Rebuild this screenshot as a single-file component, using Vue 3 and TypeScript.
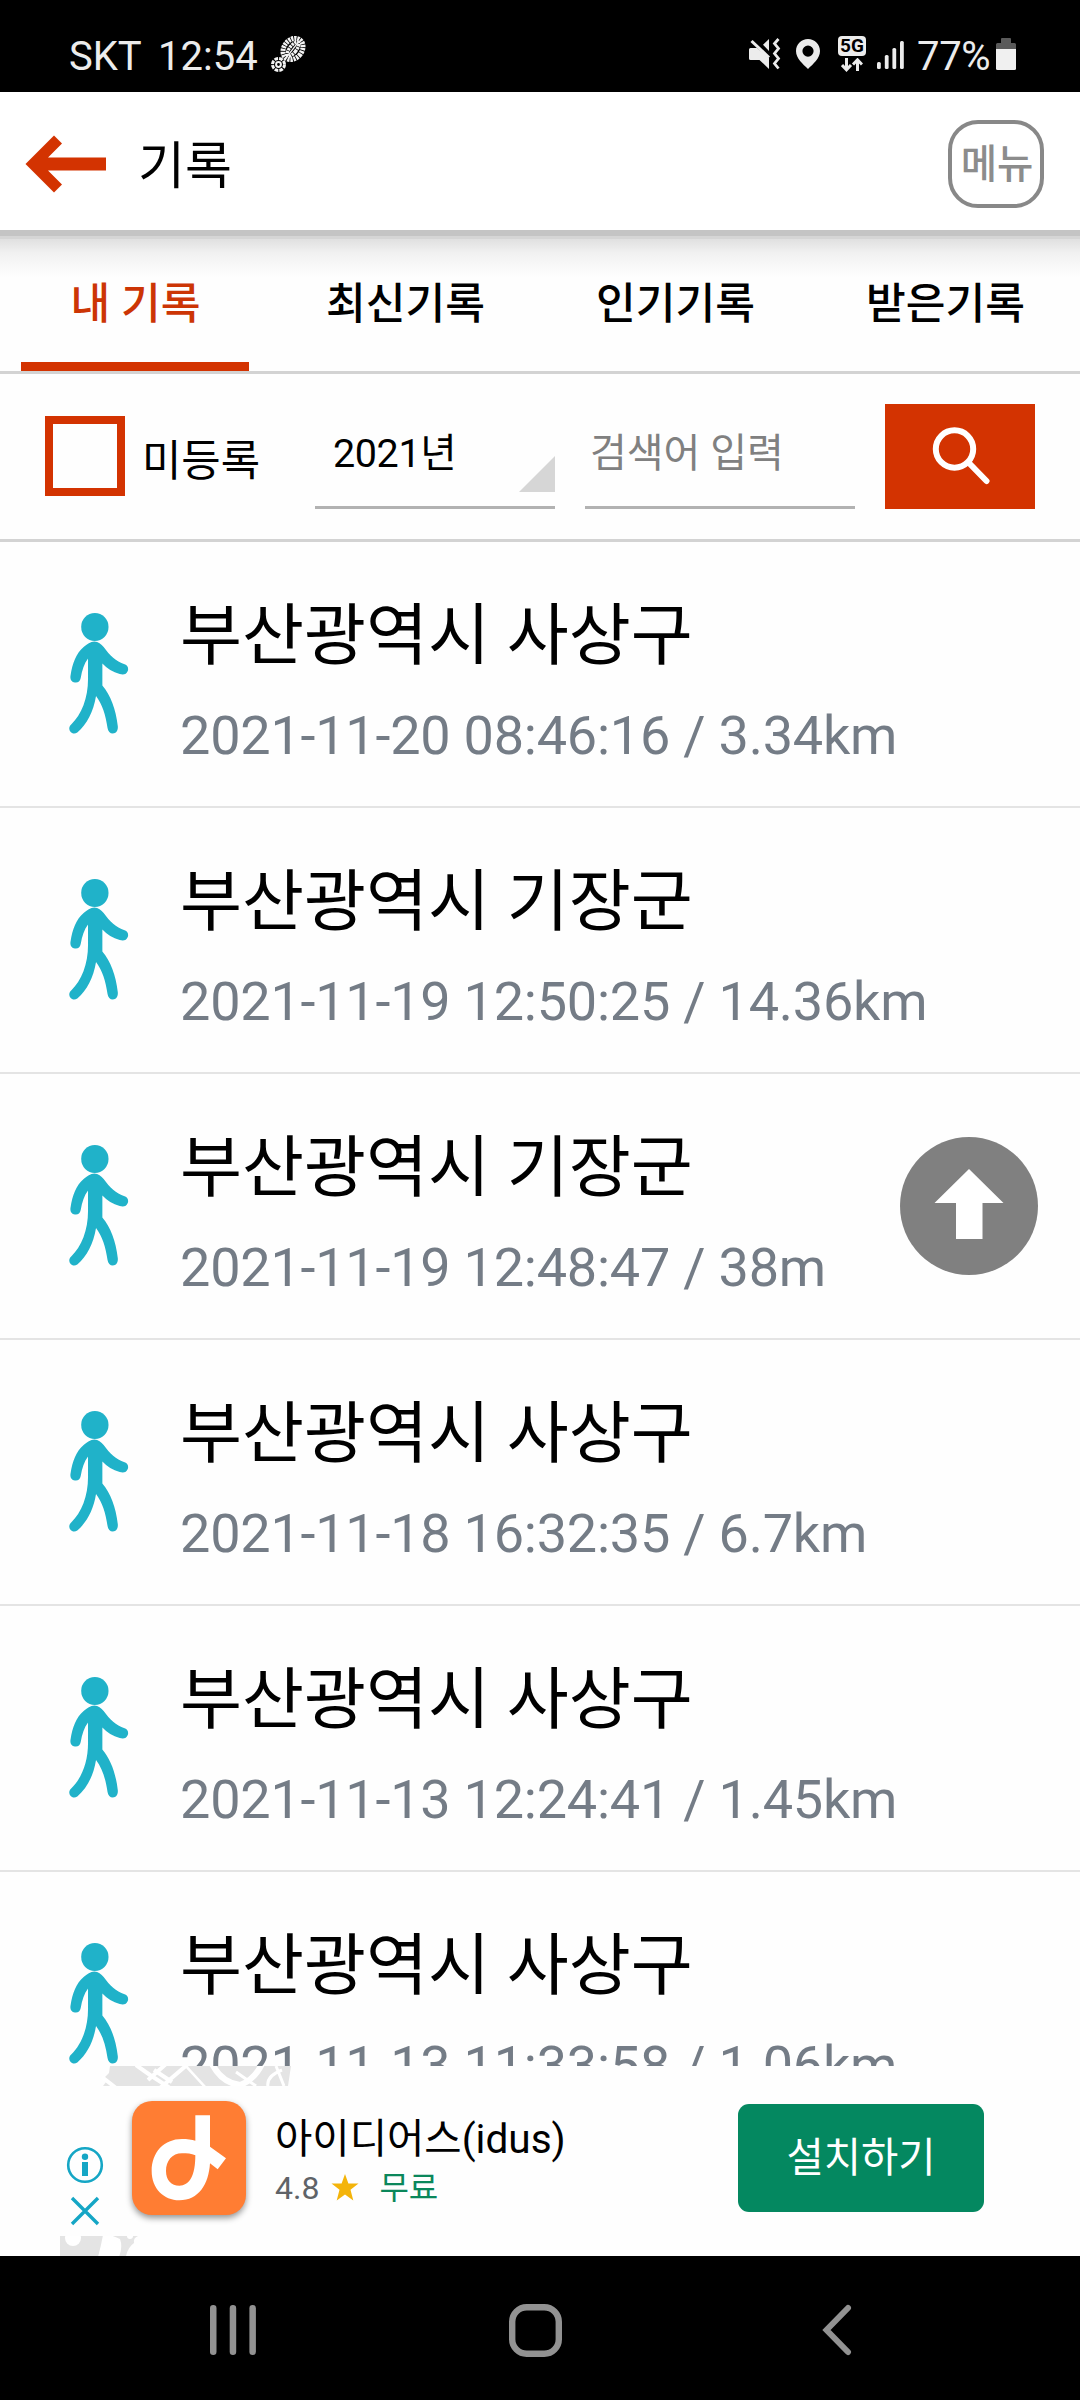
<script setup lang="ts">
import { ref } from 'vue'

interface WalkRecord {
  place: string
  time: string
  distance: string
}

const tabs: string[] = ['내 기록', '최신기록', '인기기록', '받은기록']
const activeTab = ref(0)

const records: WalkRecord[] = [
  { place: '부산광역시 사상구', time: '2021-11-20 08:46:16', distance: '3.34km' },
  { place: '부산광역시 기장군', time: '2021-11-19 12:50:25', distance: '14.36km' },
  { place: '부산광역시 기장군', time: '2021-11-19 12:48:47', distance: '38m' },
  { place: '부산광역시 사상구', time: '2021-11-18 16:32:35', distance: '6.7km' },
  { place: '부산광역시 사상구', time: '2021-11-13 12:24:41', distance: '1.45km' },
  { place: '부산광역시 사상구', time: '2021-11-13 11:33:58', distance: '1.06km' },
]
</script>

<template>
  <div class="screen">
    <div class="status">
      <span class="carrier">SKT</span>
      <span class="clock">12:54</span>
      <svg class="foot" width="36" height="38" viewBox="0 0 36 38">
        <g fill="none" stroke="#f4f4f4">
          <g transform="rotate(38 23 13)">
            <ellipse cx="23" cy="13" rx="9" ry="11.5" stroke-width="5" stroke-dasharray="2.2 .8" />
            <ellipse cx="23" cy="13" rx="3.4" ry="8.5" stroke-width="3.4" stroke-dasharray="2.4 .7" />
            <path d="M23 4V22" stroke-width="1.4" />
          </g>
          <circle cx="8.500" cy="28.500" r="6" stroke-width="3" stroke-dasharray="3.6 1.1" />
          <circle cx="8.500" cy="28.500" r="2.400" stroke-width="2" />
        </g>
      </svg>
      <div class="status-right">
        <svg width="32" height="36" viewBox="0 0 32 36" fill="#ececec">
          <path d="M1.500 12H8L20 22V33L10.500 24H1.500Q0 24 0 22.500V13.500Q0 12 1.500 12ZM20 3V15L14 8.700Z" />
          <path d="M2.500 5L20 21.500" stroke="#ececec" stroke-width="3" fill="none" />
          <path d="M29.500 3L25.500 7.500L29.500 12.500L25.500 17.500L29.500 22.500L25.500 27.500L29.500 32.500" stroke="#ececec" stroke-width="2.800" fill="none" />
        </svg>
        <svg class="pin" width="24" height="36" viewBox="0 0 24 36">
          <path fill="#ececec" fill-rule="evenodd" d="M12 3C5.400 3 0 8.200 0 15C0 22.500 7 28 12 33C17 28 24 22.500 24 15C24 8.200 18.600 3 12 3ZM12 9.500A5.600 5.600 0 1 1 12 20.700A5.600 5.600 0 1 1 12 9.500Z" />
        </svg>
        <div class="net">
          <span class="net-label">5G</span>
          <svg width="22" height="14" viewBox="0 0 22 14" fill="none" stroke="#ececec" stroke-width="3">
            <path d="M5.500 0V12M1 7L5.500 11.800L10 7M16.500 13V2M12 6.500L16.500 1.800L21 6.500" />
          </svg>
        </div>
        <svg class="signal" width="27" height="30" viewBox="0 0 27 30" fill="#ececec">
          <rect x="0" y="22" width="3.800" height="7" rx="1.500" />
          <rect x="7.800" y="15" width="3.800" height="14" rx="1.500" />
          <rect x="15.400" y="8" width="3.800" height="21" rx="1.500" />
          <rect x="23" y="1" width="3.800" height="28" rx="1.500" />
        </svg>
        <span class="percent">77%</span>
        <svg class="battery" width="20" height="32" viewBox="0 0 20 32">
          <path d="M5 1Q5 0 6 0H14Q15 0 15 1V5H18.500Q20 5 20 6.500V11H0V6.500Q0 5 1.500 5H5Z" fill="#5a5a5a" />
          <path d="M0 11H20V30.500Q20 32 18.500 32H1.500Q0 32 0 30.500Z" fill="#f0f0f0" />
        </svg>
      </div>
    </div>

    <header class="header">
      <svg width="82" height="60" viewBox="0 0 82 60">
        <path d="M29 1.500L0.500 30L29 58.500L37 50.500L23 36.500H81V23.500H23L37 9.500Z" fill="#d33301" />
      </svg>
      <h1 class="title">기록</h1>
      <button class="menu">메뉴</button>
    </header>
    <div class="bar"></div>

    <nav class="tabs">
      <div v-for="(tab, i) in tabs" :key="tab" class="tab" :class="{ active: i === activeTab }" @click="activeTab = i">
        {{ tab }}
      </div>
    </nav>

    <div class="filters">
      <div class="check"></div>
      <span class="check-label">미등록</span>
      <div class="select">
        <span class="year">2021년</span>
        <svg width="36" height="36" viewBox="0 0 36 36"><path d="M36 0V36H0Z" fill="#d6d6d6" /></svg>
      </div>
      <div class="query">검색어 입력</div>
      <button class="search">
        <svg width="60" height="60" viewBox="0 0 60 60" fill="none" stroke="#fff" stroke-width="6" stroke-linecap="round">
          <circle cx="22.500" cy="24" r="18.700" />
          <path d="M37 38L54.500 56" />
        </svg>
      </button>
    </div>

    <div class="list">
      <div v-for="r in records" :key="r.time" class="row">
        <svg class="walker" width="60" height="122" viewBox="0 0 61.5 122" preserveAspectRatio="none">
          <circle cx="26.500" cy="14" r="14" fill="#20b2c9" />
          <path
            fill="#20b2c9"
            d="M26 28.500C30 28.500 33 31 35.500 34C42 42.500 48 48.500 57 51.200C60.500 52.500 61.200 55.500 60.200 58C59 61.500 55.500 62 52 61C45 59 39 55.500 34.200 50.500V72.500C42.500 82 48 96 50 113C50.500 117.500 48.500 120.500 45 120.500C42 120.500 40 118.500 39.500 115C37.500 102 34.500 92 27.700 83C25 99 18.500 111 8.500 119.500C6 121.300 3.200 120.800 1.500 118.800C-.4 116.500 0 113.500 2 111.700C13 101.500 19.500 85 19.500 66V45.500C15.500 50.500 13.500 57 12 65C11.300 68.500 9 70 6 69.500C2.500 69 1 66.500 1.500 63C3.500 50 7.500 40 15 34C18.500 31 22 28.500 26 28.500Z"
          />
        </svg>
        <div class="info">
          <div class="place">{{ r.place }}</div>
          <div class="meta">{{ r.time }} / {{ r.distance }}</div>
        </div>
      </div>
      <button class="to-top">
        <svg width="138" height="138" viewBox="0 0 138 138">
          <circle cx="69" cy="69" r="69" fill="#808080" />
          <path d="M69 32L103.500 66H82.500V102H56V66H34.500Z" fill="#fff" />
        </svg>
      </button>
    </div>

    <div class="ad">
      <svg class="ad-edge" width="1080" height="20" viewBox="0 0 1080 20">
        <path d="M110 0H291L288 20H103L106 16L104 12L109 7Z" fill="#e4e4e4" />
        <g fill="none" stroke="#fff">
          <path d="M102 11L116 22M136 -1L150 9L170 22M148 14L166 -2M160 22L188 -2M154 4L172 16" stroke-width="4" />
          <path d="M184 -2L206 22" stroke-width="2.500" />
          <path d="M212 -2Q222 17 240 19Q254 14 262 -2" stroke-width="6" />
          <path d="M236 6L256 20M268 21Q266 10 282 4M276 0L284 20" stroke-width="3" />
        </g>
      </svg>
      <div class="ad-body">
        <div class="ad-choices">
          <svg width="38" height="38" viewBox="0 0 38 38">
            <circle cx="19" cy="19" r="16.800" fill="none" stroke="#15a6c5" stroke-width="2.600" />
            <circle cx="19" cy="10.800" r="3.200" fill="#15a6c5" />
            <path d="M16 16H22V30H16Z" fill="#15a6c5" />
          </svg>
          <svg width="30" height="30" viewBox="0 0 30 30">
            <path d="M2 2L28 28M28 2L2 28" stroke="#15a6c5" stroke-width="3.400" fill="none" />
          </svg>
        </div>
        <div class="app-icon">
          <svg width="114" height="114" viewBox="0 0 342 342">
            <path
              fill="#fff"
              fill-rule="evenodd"
              d="M190 43H234V137L282 172L257 205L234 187C230 250 200 298 142 298C95 298 59 262 59 210C59 155 95 114 150 114C165 114 180 116 190 119ZM190 163C178 158 165 157 150 157C120 157 102 180 102 210C102 238 118 254 142 254C172 254 190 225 190 163Z"
            />
          </svg>
        </div>
        <div class="ad-text">
          <div class="ad-name">아이디어스(idus)</div>
          <div class="ad-sub">
            <span>4.8</span>
            <svg width="28" height="28" viewBox="0 0 28 28">
              <path d="M14 0L17.400 9.600H27.500L19.500 15.800L22.300 26.500L14 20.500L5.700 26.500L8.500 15.800L.5 9.600H10.600Z" fill="#f4b40a" />
            </svg>
            <span class="free">무료</span>
          </div>
        </div>
        <button class="install">설치하기</button>
      </div>
      <svg class="ad-edge" width="1080" height="20" viewBox="0 0 1080 20">
        <path d="M60 0H138Q133 2 134 7Q128 11 126 20H60Z" fill="#e4e4e4" />
        <circle cx="73" cy="2" r="8" fill="#fff" />
        <path d="M103 -1Q101 10 98 21H119Q123 11 120 3Q113 0 110 -1Z" fill="#fff" />
        <circle cx="130" cy="0" r="3" fill="#fff" />
      </svg>
    </div>

    <div class="navbar">
      <svg width="46" height="50" viewBox="0 0 46 50" fill="#929292">
        <rect x="0" width="6.500" height="50" rx="3.200" />
        <rect x="19.700" width="6.500" height="50" rx="3.200" />
        <rect x="39.400" width="6.500" height="50" rx="3.200" />
      </svg>
      <svg class="home" width="53" height="53" viewBox="0 0 53 53" fill="none">
        <rect x="3.200" y="3.200" width="46.600" height="46.600" rx="14.500" stroke="#929292" stroke-width="6.400" />
      </svg>
      <svg width="30" height="52" viewBox="0 0 30 52" fill="none">
        <path d="M26 4L4.500 26L26 48" stroke="#929292" stroke-width="6" stroke-linecap="round" />
      </svg>
    </div>
  </div>
</template>

<style>
body {
  margin: 0;
  background: #fff;
}
</style>

<style scoped>
.screen {
  width: 1080px;
  height: 2400px;
  overflow: hidden;
  background: #fefefe;
  color: #000;
  font-family: Roboto, "Noto Sans CJK KR", sans-serif;
  display: flex;
  flex-direction: column;
}
.screen svg {
  display: block;
  flex: none;
}
button {
  font-family: inherit;
  margin: 0;
  padding: 0;
  border: 0;
  background: none;
}

.status {
  height: 92px;
  flex: none;
  background: #000;
  color: #ececec;
  display: flex;
  align-items: flex-start;
  padding: 36px 64px 0 69px;
  box-sizing: border-box;
  font-size: 40px;
  line-height: 42px;
}
.carrier {
  width: 89px;
}
.clock {
  width: 100px;
}
.foot {
  margin-left: 12px;
}
.status-right {
  margin-left: auto;
  display: flex;
  align-items: flex-start;
}
.pin {
  margin-left: 15px;
}
.net {
  margin-left: 18px;
  width: 28px;
  display: flex;
  flex-direction: column;
  align-items: center;
  gap: 2px;
}
.net-label {
  width: 28px;
  height: 20px;
  border-radius: 4px;
  background: #ececec;
  color: #000;
  font-size: 19px;
  line-height: 20px;
  font-weight: 700;
  text-align: center;
}
.signal {
  margin: 4px 0 0 11px;
}
.percent {
  margin-left: 13px;
  width: 74px;
  letter-spacing: -0.3px;
}
.battery {
  margin: 2px 0 0 5px;
}

.header {
  height: 138px;
  flex: none;
  display: flex;
  align-items: center;
  padding: 6px 36px 0 25px;
  box-sizing: border-box;
  background: #fff;
}
.title {
  margin: 5px 0 0 31px;
  font-size: 51px;
  line-height: 60px;
  font-weight: 400;
}
.menu {
  margin: -1px 0 0 auto;
  width: 96px;
  height: 88px;
  border: 4px solid #888;
  border-radius: 30px;
  color: #8c8c8c;
  font-size: 39.5px;
  font-weight: 500;
  line-height: 82px;
  padding-left: 2px;
  white-space: nowrap;
}
.bar {
  height: 9px;
  flex: none;
  background: linear-gradient(#c4c4c4 6px, #d5d5d5 6px);
}

.tabs {
  height: 135px;
  flex: none;
  box-sizing: border-box;
  border-bottom: 3px solid #d3d3d3;
  background: linear-gradient(#e0e0e0, #f1f1f1 14px, #fefefe 38px);
  display: flex;
}
.tab {
  flex: 1;
  margin: 0 21px;
  padding: 36px 0 0 1px;
  box-sizing: border-box;
  font-size: 43.2px;
  line-height: 60px;
  font-weight: 500;
  text-align: center;
  white-space: nowrap;
}
.tab.active {
  color: #cc3505;
  border-bottom: 9px solid #d33301;
}

.filters {
  height: 168px;
  flex: none;
  box-sizing: border-box;
  border-bottom: 3px solid #d3d3d3;
  padding: 30px 45px 0;
  display: flex;
  align-items: flex-start;
}
.check {
  width: 80px;
  height: 80px;
  margin-top: 12px;
  box-sizing: border-box;
  border: 8px solid #d33301;
}
.check-label {
  margin: 27px 0 0 17px;
  width: 173px;
  font-size: 42.8px;
  line-height: 60px;
}
.select,
.query {
  height: 105px;
  box-sizing: border-box;
  border-bottom: 3px solid #b2b2b2;
  font-size: 40px;
  line-height: 99px;
}
.select {
  width: 240px;
  padding-left: 18px;
  display: flex;
  justify-content: space-between;
}
.year {
  font-size: 39.5px;
  letter-spacing: -0.4px;
}
.select svg {
  margin-top: 52px;
}
.query {
  width: 270px;
  margin-left: 30px;
  padding-left: 5px;
  color: #808080;
}
.search {
  width: 150px;
  height: 105px;
  margin-left: 30px;
  background: #d33301;
  display: flex;
  padding: 21px 0 0 47px;
}

.list {
  position: relative;
  height: 1524px;
  flex: none;
  overflow: hidden;
}
.row {
  height: 266px;
  box-sizing: border-box;
  border-bottom: 2px solid #e4e4e4;
  display: flex;
  padding-left: 69px;
}
.walker {
  margin-top: 71px;
}
.info {
  margin: 57px 0 0 51px;
}
.place {
  font-size: 67.4px;
  line-height: 74px;
}
.meta {
  margin-top: 26px;
  font-size: 54px;
  line-height: 74px;
  letter-spacing: -0.22px;
  color: #747c86;
}
.to-top {
  position: absolute;
  left: 900px;
  top: 595px;
}

.ad {
  flex: none;
  height: 190px;
  background: #fefefe;
}
.ad-body {
  height: 150px;
  display: flex;
  align-items: flex-start;
  padding: 0 96px 0 66px;
}
.ad-choices {
  width: 66px;
  padding-top: 60px;
  display: flex;
  flex-direction: column;
  gap: 12px;
}
.ad-choices svg + svg {
  margin-left: 4px;
}
.app-icon {
  margin-top: 15px;
  width: 114px;
  height: 114px;
  border-radius: 20px;
  background: #ff7d33;
  box-shadow: 0 3px 6px rgba(0, 0, 0, 0.42);
}
.ad-text {
  margin: 29px 0 0 29px;
}
.ad-name {
  font-size: 40.6px;
  line-height: 48px;
}
.ad-sub {
  margin-top: 5px;
  display: flex;
  align-items: center;
  font-size: 32px;
  line-height: 40px;
  color: #5f6368;
}
.ad-sub svg {
  margin: 0 0 0 12px;
}
.free {
  margin-left: 20px;
  color: #0b875b;
}
.install {
  margin: 18px 0 0 auto;
  width: 246px;
  height: 108px;
  border-radius: 11px;
  background: #048860;
  color: #fff;
  font-size: 40.5px;
  line-height: 108px;
}

.navbar {
  flex: none;
  height: 144px;
  background: #000;
  display: flex;
  align-items: center;
  justify-content: space-between;
  padding: 5px 228px 1px 210px;
  box-sizing: border-box;
}
.home {
  margin-right: 8px;
}
</style>
